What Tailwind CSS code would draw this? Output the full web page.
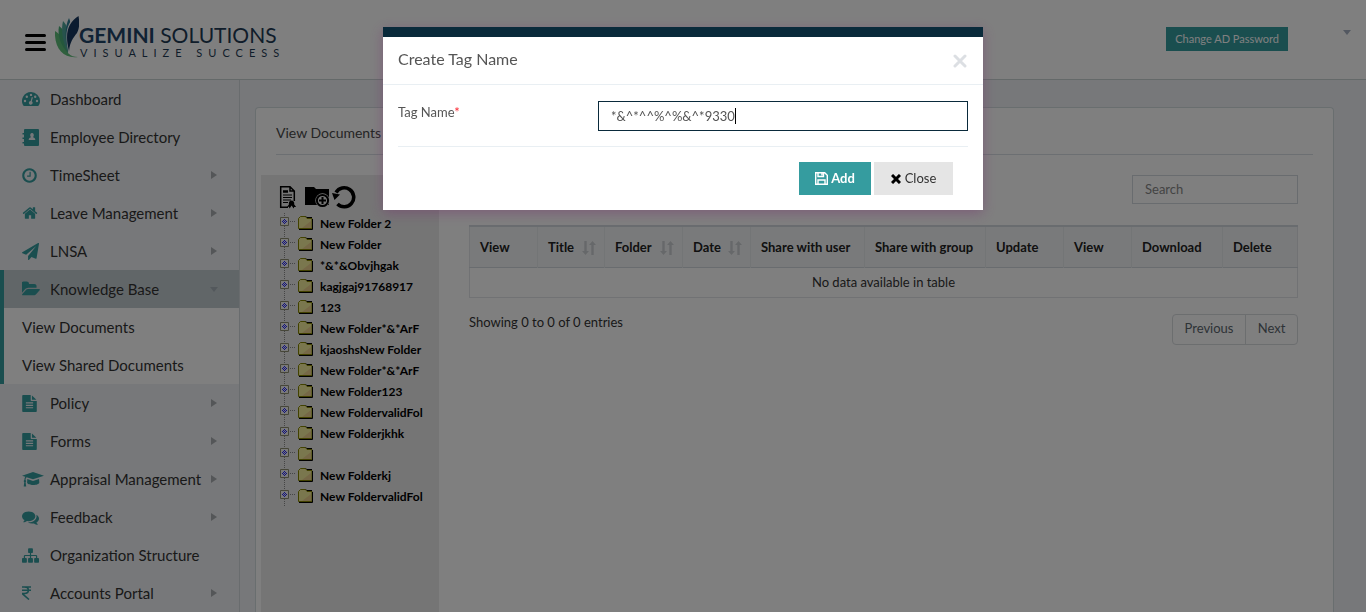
<!DOCTYPE html>
<html lang="en">
<head>
<meta charset="utf-8">
<meta name="viewport" content="width=device-width, initial-scale=1">
<title>View Documents</title>
<script src="https://cdn.jsdelivr.net/npm/@tailwindcss/browser@4"></script>
</head>
<body class="font-['Lato',sans-serif] text-[13px] text-[#333] bg-[#eef0f4]">

<svg class="hidden" aria-hidden="true">
  <symbol id="i-dash" viewBox="0 0 18 14"><path fill-rule="evenodd" d="M9 0a9 9 0 0 1 9 9c0 1.700-.5 3.300-1.300 4.600-.2.300-.4.400-.7.400H2c-.3 0-.500-.1-.7-.4A9 9 0 0 1 9 0zM3 7.800a1.200 1.200 0 1 0 0 2.400 1.200 1.200 0 0 0 0-2.400zM4.800 3.500a1.200 1.200 0 1 0 0 2.400 1.200 1.200 0 0 0 0-2.400zM9 1.700a1.200 1.200 0 1 0 0 2.400 1.200 1.200 0 0 0 0-2.400zM13.200 3.500a1.200 1.200 0 1 0 0 2.400 1.200 1.200 0 0 0 0-2.400zM15 7.800a1.200 1.200 0 1 0 0 2.400 1.200 1.200 0 0 0 0-2.400zM9.800 5.100 8.700 8.900a1.900 1.900 0 1 0 1.100.300L10.900 5.400z"/></symbol>
  <symbol id="i-book" viewBox="0 0 17 17"><path fill-rule="evenodd" d="M3 0h13a1 1 0 0 1 1 1v15a1 1 0 0 1-1 1H3a1 1 0 0 1-1-1v-1.500H.500v-1.500H2v-3H.500V8.500H2v-3H.500V4H2V1a1 1 0 0 1 1-1zM10 4a1.900 2.200 0 0 0-1.300 3.700v.8C7.500 8.900 6.700 9.300 6.700 11h6.600c0-1.700-.8-2.100-2-2.500v-.8A1.900 2.200 0 0 0 10 4z"/></symbol>
  <symbol id="i-clock" viewBox="0 0 1792 1792"><path d="M1024 544v448q0 14-9 23t-23 9h-320q-14 0-23-9t-9-23v-64q0-14 9-23t23-9h224v-352q0-14 9-23t23-9h64q14 0 23 9t9 23zm416 352q0-148-73-273t-198-198-273-73-273 73-198 198-73 273 73 273 198 198 273 73 273-73 198-198 73-273zm224 0q0 209-103 385.500t-279.500 279.500-385.500 103-385.500-103-279.500-279.500-103-385.500 103-385.500 279.500-279.500 385.500-103 385.500 103 279.500 279.500 103 385.500z"/></symbol>
  <symbol id="i-home" viewBox="0 0 1792 1792"><path d="M1472 992v480q0 26-19 45t-45 19h-384v-384h-256v384h-384q-26 0-45-19t-19-45v-480q0-1 .5-3t.5-3l575-474 575 474q1 2 1 6zm223-69l-62 74q-8 9-21 11h-3q-13 0-21-7l-692-577-692 577q-12 8-24 7-13-2-21-11l-62-74q-8-10-7-23.500t11-21.500l719-599q32-26 76-26t76 26l244 204v-195q0-14 9-23t23-9h192q14 0 23 9t9 23v408l219 182q10 8 11 21.500t-7 23.500z"/></symbol>
  <symbol id="i-plane" viewBox="0 0 1792 1792"><path d="M1764 11q33 24 27 64l-256 1536q-5 29-32 45-14 8-31 8-11 0-24-5l-453-185-242 295q-18 23-49 23-13 0-22-4-19-7-30.500-23.500t-11.500-36.500v-349l864-1059-1069 925-395-162q-37-14-40-55-2-40 32-59l1664-960q15-9 32-9 20 0 36 11z"/></symbol>
  <symbol id="i-open" viewBox="0 0 1820 1792"><path d="M1815 952q0 31-31 66l-336 396q-43 51-120.500 86.500t-143.500 35.500h-1088q-34 0-60.500-13t-26.500-43q0-31 31-66l336-396q43-51 120.500-86.500t143.500-35.500h1088q34 0 60.500 13t26.500 43zm-343-344v160h-832q-94 0-197 47.500t-164 119.500l-337 396-5 6q0-4-.5-12.500t-.5-12.500v-960q0-92 66-158t158-66h320q92 0 158 66t66 158v32h544q92 0 158 66t66 158z"/></symbol>
  <symbol id="i-file" viewBox="128 0 1536 1792"><path d="M1596 476q14 14 28 36h-472v-472q22 14 36 28zm-476 164h544v1056q0 40-28 68t-68 28h-1344q-40 0-68-28t-28-68v-1600q0-40 28-68t68-28h800v544q0 40 28 68t68 28zm160 736v-64q0-14-9-23t-23-9h-704q-14 0-23 9t-9 23v64q0 14 9 23t23 9h704q14 0 23-9t9-23zm0-256v-64q0-14-9-23t-23-9h-704q-14 0-23 9t-9 23v64q0 14 9 23t23 9h704q14 0 23-9t9-23zm0-256v-64q0-14-9-23t-23-9h-704q-14 0-23 9t-9 23v64q0 14 9 23t23 9h704q14 0 23-9t9-23z"/></symbol>
  <symbol id="i-grad" viewBox="0 0 22 15"><path d="M11 0 22 3.700 11 7.300 4.600 5.200C3.900 5.800 3.600 6.700 3.500 7.900a1.300 1.300 0 0 1 .1 2.200L4.200 14.500H1.700l.6-4.400a1.300 1.300 0 0 1 .1-2.200c0-1.300.3-2.400.9-3.200L0 3.700zM5.300 7.100 11 9l6-1.900.3 3.400C17.300 12.100 14.500 13 11.200 13S5.100 12.100 5.100 10.500z"/></symbol>
  <symbol id="i-chat" viewBox="0 0 1792 1792"><path d="M1408 768q0 139-94 257t-256.500 186.500-353.500 68.500q-86 0-176-16-124 88-278 128-36 9-86 16h-3q-11 0-20.500-8t-11.500-21q-1-3-1-6.500t.5-6.500 2-6l2.500-5 3.500-5.500 4-5 4.500-5 4-4.500q5-6 23-25t26-29.500 22.500-29 25-38.500 20.500-44q-124-72-195-177t-71-224q0-139 94-257t256.500-186.500 353.500-68.500 353.500 68.500 256.500 186.500 94 257zm384 256q0 120-71 224.500t-195 176.500q10 24 20.500 44t25 38.500 22.500 29 26 29.500 23 25q1 1 4 4.500t4.500 5 4 5 3.500 5.500l2.500 5 2 6 .5 6.500-1 6.500q-3 14-13 22t-22 7q-50-7-86-16-154-40-278-128-90 16-176 16-271 0-472-132 58 4 88 4 161 0 309-45t264-129q125-92 192-212t67-254q0-77-23-152 129 71 204 178t75 230z"/></symbol>
  <symbol id="i-site" viewBox="0 0 1792 1792"><path d="M1792 1248v320q0 40-28 68t-68 28h-320q-40 0-68-28t-28-68v-320q0-40 28-68t68-28h96v-192h-512v192h96q40 0 68 28t28 68v320q0 40-28 68t-68 28h-320q-40 0-68-28t-28-68v-320q0-40 28-68t68-28h96v-192h-512v192h96q40 0 68 28t28 68v320q0 40-28 68t-68 28h-320q-40 0-68-28t-28-68v-320q0-40 28-68t68-28h96v-192q0-52 38-90t90-38h512v-192h-96q-40 0-68-28t-28-68v-320q0-40 28-68t68-28h320q40 0 68 28t28 68v320q0 40-28 68t-68 28h-96v192h512q52 0 90 38t38 90v192h96q40 0 68 28t28 68z"/></symbol>
  <symbol id="i-rupee" viewBox="0 0 9 14"><path fill="none" stroke="currentColor" stroke-width="1.600" d="M0 1h9M0 4.300h9M0 1h2.500C7.700 1 7.700 7.500 2.500 7.500H.800v.6L7 13.500"/></symbol>
  <symbol id="i-right" viewBox="0 0 6 8"><path d="M0 0l6 4-6 4z"/></symbol>
  <symbol id="i-down" viewBox="0 0 8 5"><path d="M0 0h8L4 5z"/></symbol>
  <symbol id="i-sort" viewBox="0 0 14 14"><path d="M2.300 0h2.400v10H7l-3.500 4L0 10h2.300zM9.300 14h2.400V4H14l-3.500-4L7 4h2.300z"/></symbol>
  <symbol id="i-node" viewBox="0 0 34 21">
    <path stroke="#8a8a8a" stroke-dasharray="1 1" d="M4.500 0v4M4.500 13v8M10 8.500h6"/>
    <path fill="#f2f2f2" stroke="#8c8c70" d="M.5 4.500h8v8h-8z"/>
    <path fill="#2020ff" d="M4 6h1v1H4zM3 7h1v1H3zM5 7h1v1H5zM2 8h1v1H2zM4 8h1v1H4zM6 8h1v1H6zM3 9h1v1H3zM5 9h1v1H5zM4 10h1v1H4z"/>
    <path fill="#f5ef9c" stroke="#858500" d="M18.500 15.500v-10l2-2h5l1.500 2h5v10z"/>
    <path fill="#ecd08f" d="M31 8v7h-9z"/>
    <path fill="none" stroke="#000" d="M19 16.500h13.500V6M26 3.500l1 1h5"/>
  </symbol>
</svg>

<div class="flex min-h-screen flex-col">
  <header class="flex h-20 shrink-0 items-start border-b border-[#c8d3d3] bg-white">
    <button type="button" aria-label="Toggle menu" class="mt-[34px] ml-[25px] flex w-[21px] flex-col gap-1">
      <span class="h-[3px] rounded-sm bg-black"></span><span class="h-[3px] rounded-sm bg-black"></span><span class="h-[3px] rounded-sm bg-black"></span>
    </button>
    <a href="#" class="mt-4 ml-[9px] flex text-[#1f3b55]">
      <svg class="h-[42px] w-6" viewBox="0 0 24 42" aria-hidden="true">
        <path fill="#5fbf7a" d="M0 15C7 19 11 29 13 37c3 3 6 4 10 4C9 43-1 33 0 15z"/>
        <path fill="#4bae78" d="M4 10c7 5 9 14 9 27C6 30 2 20 4 10z"/>
        <path fill="#4fa59a" d="M8 5c5 5 6 10 5 32C7 25 6 13 8 5z"/>
        <path fill="#2f7f96" d="M14 2c3 6 1 20 0 34C9 24 10 10 14 2z"/>
        <path fill="#fff" d="M23-1C13 4 8 16 14 38c1-11 3-15 8-22 2-4 3-9 1-17z"/>
        <path fill="#17375e" d="M23.500 0C14 6 9 16 14 35c1-9 4-13 8-18 2-4 3-9 1.500-17z"/>
      </svg>
      <span class="flex flex-col pt-2">
        <span class="text-[21px] leading-[22px] whitespace-nowrap"><b class="font-bold text-[#1f4468]">GEMINI</b> SOLUTIONS</span>
        <span class="ml-px text-[11px] leading-[13px] tracking-[6px] whitespace-nowrap">VISUALIZE SUCCESS</span>
      </span>
    </a>
    <button type="button" class="mt-[27px] ml-auto h-6 bg-[#359c9f] px-[9px] text-[11px] leading-6 whitespace-nowrap text-white">Change AD Password</button>
    <button type="button" aria-label="Account menu" class="mt-[30px] mr-[15px] ml-[55px]"><svg class="h-[5px] w-2 fill-[#a7b1c2]"><use href="#i-down"/></svg></button>
  </header>

  <div class="flex flex-1">
    <nav class="w-60 shrink-0 border-r border-[#d3d8dc] text-[15px] whitespace-nowrap text-[#333]">
      <ul class="fill-[#359c9f]">
        <li><a href="#" class="flex h-[38px] items-center px-[22px]"><span class="w-7 shrink-0"><svg class="h-[14px] w-[18px]"><use href="#i-dash"/></svg></span>Dashboard</a></li>
        <li><a href="#" class="flex h-[38px] items-center px-[22px]"><span class="w-7 shrink-0"><svg class="size-[17px]"><use href="#i-book"/></svg></span>Employee Directory</a></li>
        <li><a href="#" class="flex h-[38px] items-center px-[22px]"><span class="-ml-px w-[29px] shrink-0"><svg class="size-[17px]"><use href="#i-clock"/></svg></span>TimeSheet<svg class="ml-auto h-2 w-[6px] fill-[#a9adb1]"><use href="#i-right"/></svg></a></li>
        <li><a href="#" class="flex h-[38px] items-center px-[22px]"><span class="w-7 shrink-0"><svg class="size-4"><use href="#i-home"/></svg></span>Leave Management<svg class="ml-auto h-2 w-[6px] fill-[#a9adb1]"><use href="#i-right"/></svg></a></li>
        <li><a href="#" class="flex h-[38px] items-center px-[22px]"><span class="w-7 shrink-0"><svg class="size-[17px]"><use href="#i-plane"/></svg></span>LNSA<svg class="ml-auto h-2 w-[6px] fill-[#a9adb1]"><use href="#i-right"/></svg></a></li>
        <li class="border-l-4 border-[#359c9f] bg-white">
          <a href="#" class="flex h-[38px] items-center bg-[#c3cdd1] pr-[21px] pl-[18px]"><span class="w-7 shrink-0"><svg class="size-[18px]"><use href="#i-open"/></svg></span>Knowledge Base<svg class="ml-auto h-[5px] w-2 fill-[#a7b1b8]"><use href="#i-down"/></svg></a>
          <ul>
            <li><a href="#" class="flex h-[38px] items-center pl-[18px]">View Documents</a></li>
            <li><a href="#" class="flex h-[38px] items-center pl-[18px]">View Shared Documents</a></li>
          </ul>
        </li>
        <li><a href="#" class="flex h-[38px] items-center px-[22px]"><span class="w-7 shrink-0"><svg class="h-[17px] w-[15px]"><use href="#i-file"/></svg></span>Policy<svg class="ml-auto h-2 w-[6px] fill-[#a9adb1]"><use href="#i-right"/></svg></a></li>
        <li><a href="#" class="flex h-[38px] items-center px-[22px]"><span class="w-7 shrink-0"><svg class="h-[17px] w-[15px]"><use href="#i-file"/></svg></span>Forms<svg class="ml-auto h-2 w-[6px] fill-[#a9adb1]"><use href="#i-right"/></svg></a></li>
        <li><a href="#" class="flex h-[38px] items-center px-[22px]"><span class="w-7 shrink-0"><svg class="h-[15px] w-[22px]"><use href="#i-grad"/></svg></span>Appraisal Management<svg class="ml-auto h-2 w-[6px] fill-[#a9adb1]"><use href="#i-right"/></svg></a></li>
        <li><a href="#" class="flex h-[38px] items-center px-[22px]"><span class="w-7 shrink-0"><svg class="size-[17px]"><use href="#i-chat"/></svg></span>Feedback<svg class="ml-auto h-2 w-[6px] fill-[#a9adb1]"><use href="#i-right"/></svg></a></li>
        <li><a href="#" class="flex h-[38px] items-center px-[22px]"><span class="w-7 shrink-0"><svg class="size-[17px]"><use href="#i-site"/></svg></span>Organization Structure</a></li>
        <li><a href="#" class="flex h-[38px] items-center px-[22px]"><span class="w-7 shrink-0 text-[#359c9f]"><svg class="h-[14px] w-[9px]"><use href="#i-rupee"/></svg></span>Accounts Portal<svg class="ml-auto h-2 w-[6px] fill-[#a9adb1]"><use href="#i-right"/></svg></a></li>
      </ul>
    </nav>

    <main class="flex min-w-0 flex-1 pt-[27px] pr-[33px] pl-[15px]">
      <section class="flex flex-1 flex-col rounded-t border border-b-0 border-[#d3dcdf] bg-white px-[5px]">
        <h1 class="mx-[15px] flex h-[47px] items-center border-b border-[#d8dfe4] pt-[3px] text-[14px] text-[#4a4a4a]">View Documents</h1>
        <div class="mt-5 flex flex-1">
          <aside class="w-[178px] shrink-0 bg-[#ebebeb] pt-[10px] pr-[15px] pl-[19px]">
            <div class="-ml-px flex h-7 items-start gap-1">
              <button type="button" aria-label="Create tag"><svg class="h-6 w-[22px]" viewBox="0 0 22 24" fill="none" stroke="#000" stroke-width="1.500" aria-hidden="true"><path d="M9 22.300H1.700V1.700H11l4.300 4.300v10M11 1.700V6h4.300"/><path stroke-width="2.500" d="M4 6.500h5"/><path stroke-width="1.200" d="M4 10h9M4 12.500h9M4 15h8M4 17.500h5"/><path fill="#000" stroke="none" d="M12.500 15.500a2.800 2.800 0 0 1 2.600 3.800l2 2.700-1.900-.1-.6 1.600-2-3-2 3-.7-1.700-1.900.2 2-2.700a2.800 2.800 0 0 1 2.500-3.800z"/></svg></button>
              <button type="button" aria-label="Add folder"><svg class="h-6 w-[25px]" viewBox="0 0 25 24" aria-hidden="true"><path d="M0 2h9l2 2h13v16H0z"/><circle cx="17.500" cy="15.500" r="7.200" fill="#ebebeb"/><circle cx="17.500" cy="15.500" r="5.600" fill="#ebebeb" stroke="#000" stroke-width="2"/><path stroke="#000" stroke-width="2" d="M14 15.500h7M17.500 12v7"/></svg></button>
              <button type="button" aria-label="Refresh" class="-ml-1"><svg class="h-6 w-[26px]" viewBox="0 0 26 24" aria-hidden="true"><path fill="none" stroke="#000" stroke-width="3.600" d="M6 7.500A9.500 9.500 0 1 1 7.500 19"/><path d="M2 8l8 1.500-5.500 5.500z"/></svg></button>
            </div>
            <ul class="text-[12px] font-bold text-black">
              <li class="flex h-[21px] items-center gap-[6px] overflow-hidden whitespace-nowrap"><svg class="h-[21px] w-[34px] shrink-0"><use href="#i-node"/></svg>New Folder 2</li>
              <li class="flex h-[21px] items-center gap-[6px] overflow-hidden whitespace-nowrap"><svg class="h-[21px] w-[34px] shrink-0"><use href="#i-node"/></svg>New Folder</li>
              <li class="flex h-[21px] items-center gap-[6px] overflow-hidden whitespace-nowrap"><svg class="h-[21px] w-[34px] shrink-0"><use href="#i-node"/></svg>*&amp;*&amp;Obvjhgak</li>
              <li class="flex h-[21px] items-center gap-[6px] overflow-hidden whitespace-nowrap"><svg class="h-[21px] w-[34px] shrink-0"><use href="#i-node"/></svg>kagjgaj91768917</li>
              <li class="flex h-[21px] items-center gap-[6px] overflow-hidden whitespace-nowrap"><svg class="h-[21px] w-[34px] shrink-0"><use href="#i-node"/></svg>123</li>
              <li class="flex h-[21px] items-center gap-[6px] overflow-hidden whitespace-nowrap"><svg class="h-[21px] w-[34px] shrink-0"><use href="#i-node"/></svg>New Folder*&amp;*ArF</li>
              <li class="flex h-[21px] items-center gap-[6px] overflow-hidden whitespace-nowrap"><svg class="h-[21px] w-[34px] shrink-0"><use href="#i-node"/></svg>kjaoshsNew Folder</li>
              <li class="flex h-[21px] items-center gap-[6px] overflow-hidden whitespace-nowrap"><svg class="h-[21px] w-[34px] shrink-0"><use href="#i-node"/></svg>New Folder*&amp;*ArF</li>
              <li class="flex h-[21px] items-center gap-[6px] overflow-hidden whitespace-nowrap"><svg class="h-[21px] w-[34px] shrink-0"><use href="#i-node"/></svg>New Folder123</li>
              <li class="flex h-[21px] items-center gap-[6px] overflow-hidden whitespace-nowrap"><svg class="h-[21px] w-[34px] shrink-0"><use href="#i-node"/></svg>New FoldervalidFol</li>
              <li class="flex h-[21px] items-center gap-[6px] overflow-hidden whitespace-nowrap"><svg class="h-[21px] w-[34px] shrink-0"><use href="#i-node"/></svg>New Folderjkhk</li>
              <li class="flex h-[21px] items-center gap-[6px] overflow-hidden whitespace-nowrap"><svg class="h-[21px] w-[34px] shrink-0"><use href="#i-node"/></svg></li>
              <li class="flex h-[21px] items-center gap-[6px] overflow-hidden whitespace-nowrap"><svg class="h-[21px] w-[34px] shrink-0"><use href="#i-node"/></svg>New Folderkj</li>
              <li class="flex h-[21px] items-center gap-[6px] overflow-hidden whitespace-nowrap"><svg class="h-[21px] w-[34px] shrink-0"><use href="#i-node"/></svg>New FoldervalidFol</li>
            </ul>
          </aside>

          <div class="flex min-w-0 flex-1 flex-col px-[30px]">
            <input type="search" aria-label="Search" placeholder="Search" class="h-[29px] w-[166px] self-end border border-[#d3d9de] bg-white px-3 pb-[2px] text-[13px] placeholder:text-[#888]">
            <table class="mt-[21px] w-full table-fixed border-collapse border border-[#e2e5e8] text-[13px]">
              <colgroup><col class="w-[68px]"><col class="w-[67px]"><col class="w-[78px]"><col class="w-[68px]"><col class="w-[114px]"><col class="w-[121px]"><col class="w-[78px]"><col class="w-[68px]"><col class="w-[91px]"><col class="w-[75px]"></colgroup>
              <thead class="bg-[#f3f5f7]">
                <tr class="h-[41px] border-t-2 border-b border-[#d3d9de] text-left whitespace-nowrap text-[#222]">
                  <th class="pt-[2px] pl-[10px] font-bold">View</th>
                  <th class="border-l border-[#e7eaec] pt-[2px] pl-[10px] font-bold"><span class="flex items-center justify-between pr-2">Title<svg class="size-[14px] fill-[#cdd1d4]"><use href="#i-sort"/></svg></span></th>
                  <th class="border-l border-[#e7eaec] pt-[2px] pl-[10px] font-bold"><span class="flex items-center justify-between pr-2">Folder<svg class="size-[14px] fill-[#cdd1d4]"><use href="#i-sort"/></svg></span></th>
                  <th class="border-l border-[#e7eaec] pt-[2px] pl-[10px] font-bold"><span class="flex items-center justify-between pr-2">Date<svg class="size-[14px] fill-[#cdd1d4]"><use href="#i-sort"/></svg></span></th>
                  <th class="border-l border-[#e7eaec] pt-[2px] pl-[10px] font-bold">Share with user</th>
                  <th class="border-l border-[#e7eaec] pt-[2px] pl-[10px] font-bold">Share with group</th>
                  <th class="border-l border-[#e7eaec] pt-[2px] pl-[10px] font-bold">Update</th>
                  <th class="border-l border-[#e7eaec] pt-[2px] pl-[10px] font-bold">View</th>
                  <th class="border-l border-[#e7eaec] pt-[2px] pl-[10px] font-bold">Download</th>
                  <th class="border-l border-[#e7eaec] pt-[2px] pl-[10px] font-bold">Delete</th>
                </tr>
              </thead>
              <tbody><tr class="h-[30px]"><td colspan="10" class="pt-[2px] text-center">No data available in table</td></tr></tbody>
            </table>
            <div class="flex items-start justify-between pt-4">
              <p class="leading-4">Showing 0 to 0 of 0 entries</p>
              <div class="flex h-[31px] divide-x divide-[#d8dcdf] rounded border border-[#d8dcdf] text-[#5c666e]">
                <button type="button" class="w-[73px] text-center">Previous</button>
                <button type="button" class="w-[51px] text-center">Next</button>
              </div>
            </div>
          </div>
        </div>
      </section>
    </main>
  </div>
</div>

<div class="fixed inset-0 z-10 flex items-start justify-center bg-black/50 pt-[27px]">
  <form role="dialog" aria-modal="true" aria-labelledby="dlg-title" class="w-full max-w-[600px] border-t-[10px] border-[#0a2a3b] bg-white text-[#555] shadow-[0_3px_12px_rgba(120,50,110,0.45)]">
    <div class="flex h-12 items-center justify-between border-b border-[#e9eff3] px-[15px] pb-1">
      <h2 id="dlg-title" class="text-[16px]">Create Tag Name</h2>
      <button type="button" aria-label="Dismiss" class="pt-1"><svg class="h-[14px] w-4" viewBox="0 0 16 14" stroke="#dcdfe3" stroke-width="3" stroke-linecap="round" aria-hidden="true"><path d="M3 2l10 10M13 2L3 12"/></svg></button>
    </div>
    <div class="mx-[15px] flex items-start justify-between border-b border-[#e9eff3] pt-4 pb-[15px]">
      <label for="tag" class="leading-[22px]">Tag Name<span class="text-red-500">*</span></label>
      <div class="relative w-[370px]">
        <input id="tag" type="text" value="*&amp;^*^^%^%&amp;^*9330" class="h-[30px] w-full border border-[#0a2a3b] bg-white px-3 text-[13px] text-[#555] caret-transparent outline-none">
        <span class="absolute top-[7px] left-[137px] h-4 w-px bg-black" aria-hidden="true"></span>
      </div>
    </div>
    <div class="flex justify-end gap-[3px] pt-[15px] pr-[30px] pb-[15px]">
      <button type="submit" class="flex h-[33px] w-[72px] items-center justify-center gap-[3px] bg-[#359c9f] font-bold text-white"><svg class="size-[13px]" viewBox="0 0 13 13" fill="none" stroke="#fff" stroke-width="1.400" aria-hidden="true"><path d="M.7.7h9L12.300 3.300v9H.7zM3 .7v3.800h5.500V.7M3 12.300V8h7v4.300"/><path stroke-width="1.500" d="M7 1v2.500"/></svg>Add</button>
      <button type="button" class="flex h-[33px] w-[79px] items-center justify-center gap-1 bg-[#e5e5e5] text-[#333]"><svg class="size-[10px]" viewBox="0 0 10 10" stroke="#000" stroke-width="3" aria-hidden="true"><path d="M1 1l8 8M9 1L1 9"/></svg>Close</button>
    </div>
  </form>
</div>
</body>
</html>
